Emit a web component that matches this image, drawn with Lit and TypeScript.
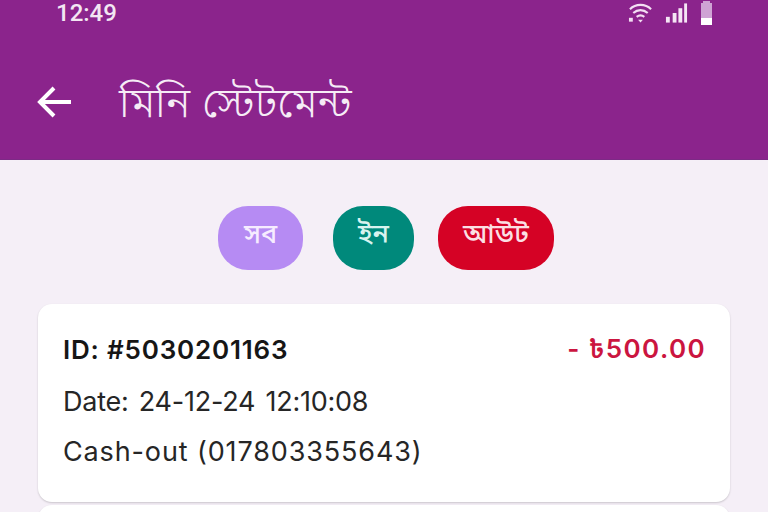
import { LitElement, html, css } from "lit";
import { customElement } from "lit/decorators.js";

@customElement("app-root")
export class AppRoot extends LitElement {
  static styles = css`
    :host { display: block; width: 768px; height: 512px; overflow: hidden; background: #f5eff7; font-family: "Inter", "Noto Sans", "Noto Sans Bengali", "Noto Serif Bengali", sans-serif; }
    .head { background: #8b248c; height: 160px; box-sizing: border-box; color: #fff; border-bottom: 1px solid #7d2a86; display: flex; flex-direction: column; }
    .status { height: 26px; box-sizing: border-box; padding: 0 56px; display: flex; align-items: center; justify-content: space-between; }
    .time { font: 500 24px/26px Roboto, sans-serif; color: #f3e6f3; }
    .sicons { display: flex; align-items: center; gap: 12px; height: 26px; }
    .sicons svg { display: block; }
    .bar { flex: 1; display: flex; align-items: center; padding: 19px 0 0 37px; gap: 46px; }
    .title { font-size: 42.4px; line-height: 50px; font-weight: 300; color: #f6ecf6; white-space: nowrap; }
    .back { display: block; }
    .chips { display: flex; justify-content: center; gap: 24px; padding: 46px 0 0 4px; }
    .chip { height: 64px; border-radius: 30px; color: #fff; font-size: 27px; font-weight: 500; display: flex; align-items: center; justify-content: center; box-sizing: border-box; padding-bottom: 5px; }
    .all { width: 85px; background: #b68bf3; margin-right: 6px; color: #f6ecff; }
    .in { width: 81px; background: #00897b; color: #d8f3ef; }
    .out { width: 116px; background: #d50225; color: #fbdfe3; }
    .list { padding: 34px 38px 0; display: flex; flex-direction: column; gap: 3px; }
    .card { background: #fff; border-radius: 14px; height: 198px; box-sizing: border-box; padding: 26px 25px 0; box-shadow: 0 1px 2px rgba(0,0,0,.18); }
    .row { display: flex; justify-content: space-between; height: 39px; align-items: center; margin-bottom: 7px; }
    .id { font-size: 26px; font-weight: 600; color: #161616; letter-spacing: .8px; }
    .amt { font-size: 26px; font-weight: 600; color: #cb1540; letter-spacing: 1.4px; margin-right: -1px; padding-top: 3px; }
    .line { font-size: 27px; line-height: 50px; color: #262626; font-weight: 400; white-space: nowrap; }
    .date { word-spacing: 3px; letter-spacing: -.25px; padding-top: 1px; margin-bottom: -1px; }
    .cash { letter-spacing: .87px; padding-top: 1px; margin-bottom: -1px; }
  `;
  render() {
    return html`
      <div class="head">
        <div class="status">
          <span class="time">12:49</span>
          <div class="sicons">
            <svg width="25" height="22" viewBox="0 0 26 22" fill="none" stroke="#f3dff3" stroke-width="2.2">
              <path d="M2 7C8 1 18 1 24 7"/><path d="M5.500 11C10 7 16 7 20.500 11"/><path d="M9 15C11.500 13 14.500 13 17 15"/>
              <path d="M10.500 18L13 21L15.500 18Z" fill="#f3dff3" stroke="none"/><rect x="1" y="16" width="4" height="4" fill="#f3dff3" stroke="none"/>
            </svg>
            <svg width="23" height="22" viewBox="0 0 24 22" fill="#f5e6f5">
              <rect x="1" y="15" width="4" height="6"/><rect x="8" y="11" width="4" height="10"/><rect x="14" y="6" width="4" height="15"/><rect x="20" y="1" width="3" height="20"/>
            </svg>
            <svg width="12" height="24" viewBox="0 0 12 24">
              <rect x="1" y="2" width="11" height="15" fill="#cfa3d4"/><rect x="3" y="0" width="7" height="3" fill="#cfa3d4"/><rect x="1" y="17" width="11" height="7" fill="#fff"/>
            </svg>
          </div>
        </div>
        <div class="bar">
          <svg class="back" width="36" height="34" viewBox="0 0 36 34" fill="none" stroke="#fff" stroke-width="4">
            <path d="M34 17H4"/><path d="M17 3L3 17L17 31"/>
          </svg>
          <span class="title">মিনি স্টেটমেন্ট</span>
        </div>
      </div>
      <div class="chips">
        <div class="chip all">সব</div>
        <div class="chip in">ইন</div>
        <div class="chip out">আউট</div>
      </div>
      <div class="list">
        <div class="card">
          <div class="row"><span class="id">ID: #5030201163</span><span class="amt">- ৳500.00</span></div>
          <div class="line date">Date: 24-12-24 12:10:08</div>
          <div class="line cash">Cash-out (017803355643)</div>
        </div>
        <div class="card"></div>
      </div>
    `;
  }
}
